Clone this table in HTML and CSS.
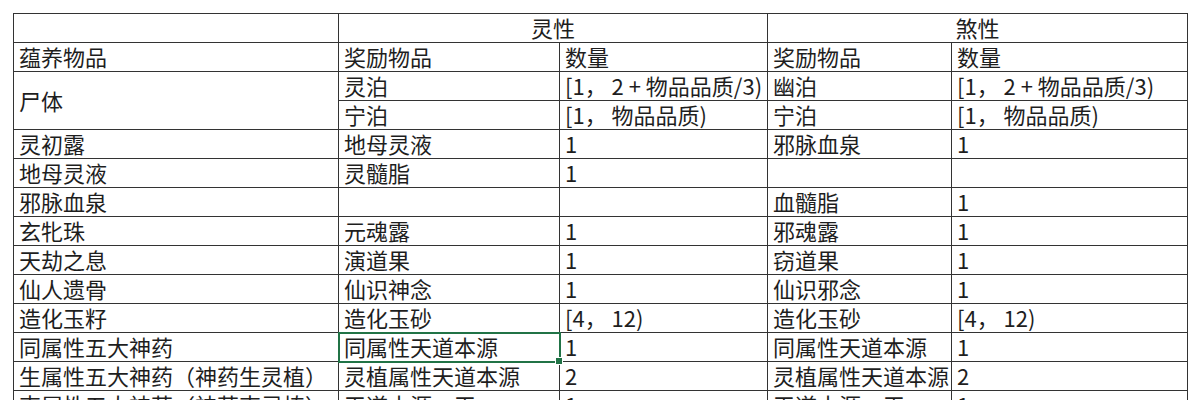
FILE: index.html
```html
<!DOCTYPE html>
<html lang="zh-CN">
<head>
<meta charset="utf-8">
<title>蕴养物品</title>
<link rel="stylesheet" href="styles.css">
</head>
<body>
<table class="sheet">
  <colgroup>
    <col class="c1"><col class="c2"><col class="c3"><col class="c4"><col class="c5">
  </colgroup>
  <tbody>
    <tr><td></td><td colspan="2" class="center">灵性</td><td colspan="2" class="center">煞性</td></tr>
    <tr><td>蕴养物品</td><td>奖励物品</td><td>数量</td><td>奖励物品</td><td>数量</td></tr>
    <tr><td rowspan="2" class="middle">尸体</td><td>灵泊</td><td>[1， 2 + 物品品质/3)</td><td>幽泊</td><td>[1， 2 + 物品品质/3)</td></tr>
    <tr><td>宁泊</td><td>[1， 物品品质)</td><td>宁泊</td><td>[1， 物品品质)</td></tr>
    <tr><td>灵初露</td><td>地母灵液</td><td>1</td><td>邪脉血泉</td><td>1</td></tr>
    <tr><td>地母灵液</td><td>灵髓脂</td><td>1</td><td></td><td></td></tr>
    <tr><td>邪脉血泉</td><td></td><td></td><td>血髓脂</td><td>1</td></tr>
    <tr><td>玄牝珠</td><td>元魂露</td><td>1</td><td>邪魂露</td><td>1</td></tr>
    <tr><td>天劫之息</td><td>演道果</td><td>1</td><td>窃道果</td><td>1</td></tr>
    <tr><td>仙人遗骨</td><td>仙识神念</td><td>1</td><td>仙识邪念</td><td>1</td></tr>
    <tr><td>造化玉籽</td><td>造化玉砂</td><td>[4， 12)</td><td>造化玉砂</td><td>[4， 12)</td></tr>
    <tr><td>同属性五大神药</td><td class="selected">同属性天道本源<span class="handle"></span></td><td>1</td><td>同属性天道本源</td><td>1</td></tr>
    <tr><td>生属性五大神药（神药生灵植）</td><td>灵植属性天道本源</td><td>2</td><td class="clip">灵植属性天道本源</td><td>2</td></tr>
    <tr><td>克属性五大神药（神药克灵植）</td><td>天道本源·天</td><td>1</td><td>天道本源·天</td><td>1</td></tr>
  </tbody>
</table>
</body>
</html>
```

FILE: styles.css
```css
html, body {
  margin: 0;
  padding: 0;
  background: #ffffff;
}

body {
  padding: 13px 0 0 13px;
  overflow: hidden;
  height: 400px;
  box-sizing: border-box;
}

.sheet {
  border-collapse: collapse;
  table-layout: fixed;
  width: 1174px;
  font-family: "Noto Sans CJK SC", "Noto Sans", sans-serif;
  font-size: 22px;
  color: #1e1e1e;
}

.c1 { width: 325px; }
.c2 { width: 221px; }
.c3 { width: 208px; }
.c4 { width: 184px; }
.c5 { width: 236px; }

.sheet tr {
  height: 29px;
}

.sheet td {
  border: 1.5px solid #333333;
  padding: 0 0 2px 5px;
  height: 29px;
  box-sizing: border-box;
  line-height: 25px;
  vertical-align: bottom;
  white-space: nowrap;
}

.sheet td.center {
  text-align: center;
  padding-left: 0;
}

.sheet td.middle {
  vertical-align: middle;
  padding-bottom: 0;
}

.sheet td.clip {
  overflow: hidden;
  text-overflow: clip;
}

.sheet td.selected {
  position: relative;
  outline: 2px solid #217346;
  outline-offset: -1px;
}

.handle {
  position: absolute;
  right: -4px;
  bottom: -4px;
  width: 6px;
  height: 6px;
  background: #217346;
  border: 1px solid #ffffff;
}
```
